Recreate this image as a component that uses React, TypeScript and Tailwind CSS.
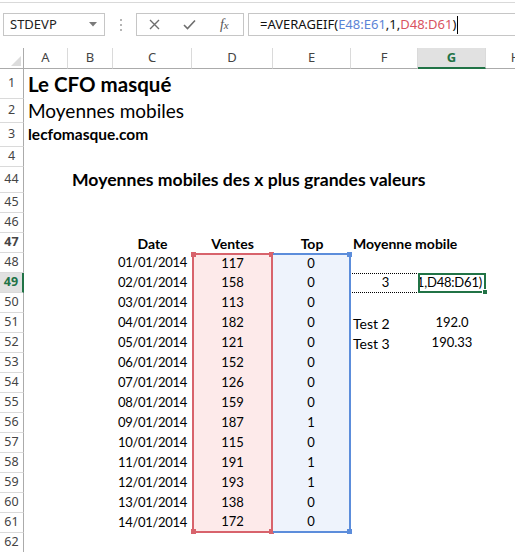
import React from "react";

const W = {
  hdr: "w-[24px]",
  A: "w-[44px]",
  B: "w-[45px]",
  C: "w-[79px]",
  D: "w-[81px]",
  E: "w-[78px]",
  F: "w-[67px]",
  G: "w-[68px]",
  H: "w-[60px]",
};

const data: [string, string, string][] = [
  ["01/01/2014", "117", "0"],
  ["02/01/2014", "158", "0"],
  ["03/01/2014", "113", "0"],
  ["04/01/2014", "182", "0"],
  ["05/01/2014", "121", "0"],
  ["06/01/2014", "152", "0"],
  ["07/01/2014", "126", "0"],
  ["08/01/2014", "159", "0"],
  ["09/01/2014", "187", "1"],
  ["10/01/2014", "115", "0"],
  ["11/01/2014", "191", "1"],
  ["12/01/2014", "193", "1"],
  ["13/01/2014", "138", "0"],
  ["14/01/2014", "172", "0"],
];

const hdrFont = { fontFamily: '"Noto Sans", "Open Sans", sans-serif' };

function RowHeader({ n, active }: { n: number; active?: boolean }) {
  return (
    <div
      className={`${W.hdr} shrink-0 flex items-center justify-center border-b border-[#dadada] text-[12.5px] ${
        active
          ? "bg-[#e1e1e1] text-[#217346] font-bold border-r-2 border-r-[#217346]"
          : "text-[#444] border-r border-r-[#ababab]"
      }`}
      style={hdrFont}
    >
      {n}
    </div>
  );
}

function Corner({ color, pos }: { color: string; pos: string }) {
  return <div className={`absolute w-[5px] h-[5px] ${color} ${pos}`} />;
}

export default function App() {
  const colLetters: [string, string][] = [
    ["A", W.A],
    ["B", W.B],
    ["C", W.C],
    ["D", W.D],
    ["E", W.E],
    ["F", W.F],
    ["G", W.G],
    ["H", W.H],
  ];

  return (
    <div
      className="w-[515px] h-[552px] overflow-hidden bg-white text-black"
      style={{ fontFamily: 'Lato, "Noto Sans", sans-serif' }}
    >
      {/* top line */}
      <div className="h-[3px] border-b border-[#d9d9d9]" />
      {/* formula bar */}
      <div className="h-[45px] flex items-start pt-[10px]" style={hdrFont}>
        <div className="ml-[3px] w-[102px] h-[23px] border border-[#c6c6c6] flex items-center justify-between pl-[6px] pr-[7px]">
          <span className="text-[13px] text-[#222]">STDEVP</span>
          <svg width="8" height="5" viewBox="0 0 8 5">
            <path d="M0 0 H8 L4 4.5 Z" fill="#7a7a7a" />
          </svg>
        </div>
        <div className="w-[31px] h-[23px] flex flex-col items-center justify-center gap-[3px]">
          <div className="w-[2px] h-[2px] bg-[#b5b5b5]" />
          <div className="w-[2px] h-[2px] bg-[#b5b5b5]" />
          <div className="w-[2px] h-[2px] bg-[#b5b5b5]" />
        </div>
        <div className="w-[108px] h-[23px] border border-[#c6c6c6] flex items-center">
          <div className="w-[36px] flex justify-center">
            <svg width="11" height="11" viewBox="0 0 11 11">
              <path d="M1 1 L10 10 M10 1 L1 10" stroke="#6e6e6e" strokeWidth="1.4" />
            </svg>
          </div>
          <div className="w-[34px] flex justify-center">
            <svg width="13" height="11" viewBox="0 0 13 11">
              <path d="M1 6 L4.5 9.5 L12 1.5" stroke="#6e6e6e" strokeWidth="1.6" fill="none" />
            </svg>
          </div>
          <div className="w-[38px] flex justify-center">
            <span
              className="italic text-[14px] text-[#555] leading-none"
              style={{ fontFamily: '"Liberation Serif", serif' }}
            >
              f<span className="text-[11px]">x</span>
            </span>
          </div>
        </div>
        <div className="ml-[4px] flex-1 h-[23px] border-y border-l border-[#c6c6c6] flex items-center pl-[11px]">
          <span className="text-[13px] whitespace-nowrap text-[#111]">
            =AVERAGEIF(<span className="text-[#5b84d6]">E48:E61</span>,1,
            <span className="text-[#d9535f]">D48:D61</span>)
          </span>
          <div className="w-[1px] h-[18px] bg-black ml-[1px]" />
        </div>
      </div>

      {/* column headers */}
      <div className="flex h-[21px]" style={hdrFont}>
        <div className={`${W.hdr} shrink-0 border-b border-r border-[#ababab] flex items-end justify-end p-[2px]`}>
          <svg width="10" height="10" viewBox="0 0 10 10">
            <path d="M10 0 V10 H0 Z" fill="#dcdcdc" />
          </svg>
        </div>
        {colLetters.map(([l, w]) => (
          <div
            key={l}
            className={`${w} shrink-0 flex items-center justify-center text-[13px] ${
              l === "G"
                ? "bg-[#e1e1e1] text-[#217346] font-bold border-b-2 border-[#217346] border-r border-r-[#dadada]"
                : "text-[#444] border-b border-[#ababab] border-r border-r-[#dadada]"
            }`}
          >
            {l}
          </div>
        ))}
      </div>

      {/* row 1 */}
      <div className="flex h-[30px]">
        <RowHeader n={1} />
        <div className="flex-1 flex items-center pl-[4px] pt-[1px] text-[20.5px] font-bold whitespace-nowrap">
          Le CFO masqué
        </div>
      </div>
      <div className="flex h-[24px]">
        <RowHeader n={2} />
        <div className="flex-1 flex items-center pl-[4px] text-[19px] whitespace-nowrap">
          Moyennes mobiles
        </div>
      </div>
      <div className="flex h-[24px]">
        <RowHeader n={3} />
        <div className="flex-1 flex items-center pl-[4px] text-[15.5px] font-bold whitespace-nowrap">
          lecfomasque.com
        </div>
      </div>
      <div className="flex h-[20px]">
        <RowHeader n={4} />
      </div>
      <div className="flex h-[26px]">
        <RowHeader n={44} />
        <div className={`${W.A} shrink-0`} />
        <div className="flex-1 flex items-center pl-[4px] pt-[1px] text-[17.6px] font-bold whitespace-nowrap">
          Moyennes mobiles des x plus grandes valeurs
        </div>
      </div>
      <div className="flex h-[20px]">
        <RowHeader n={45} />
      </div>
      <div className="flex h-[20px]">
        <RowHeader n={46} />
      </div>
      {/* row 47 headers */}
      <div className="flex h-[20px] text-[14px] font-bold">
        <RowHeader n={47} />
        <div className={`${W.A} shrink-0`} />
        <div className={`${W.B} shrink-0`} />
        <div className={`${W.C} shrink-0 flex items-center justify-center`}>Date</div>
        <div className={`${W.D} shrink-0 flex items-center justify-center`}>Ventes</div>
        <div className={`${W.E} shrink-0 flex items-center justify-center`}>Top</div>
        <div className={`${W.F} shrink-0 flex items-center pl-[2px] whitespace-nowrap`}>Moyenne mobile</div>
      </div>

      {data.map(([d, v, t], i) => {
        const n = 48 + i;
        const first = i === 0;
        const last = i === data.length - 1;
        return (
          <div key={n} className="flex h-[20px] text-[14px]">
            <RowHeader n={n} active={n === 49} />
            <div className={`${W.A} shrink-0`} />
            <div className={`${W.B} shrink-0`} />
            <div className={`${W.C} shrink-0 flex items-center justify-end pr-[5px] text-[13px] tracking-[-0.3px]`}>
              {d}
            </div>
            <div
              className={`${W.D} shrink-0 relative flex items-center justify-center bg-[#fdeaea] border-x-2 border-[#d8636c] text-[13px] ${
                first ? "border-t-2" : ""
              } ${last ? "border-b-2" : ""}`}
            >
              {v}
              {first && <Corner color="bg-[#d8636c]" pos="-top-[3px] -left-[3px]" />}
              {first && <Corner color="bg-[#d8636c]" pos="-top-[3px] -right-[3px]" />}
              {last && <Corner color="bg-[#d8636c]" pos="-bottom-[3px] -left-[3px]" />}
              {last && <Corner color="bg-[#d8636c]" pos="-bottom-[3px] -right-[3px]" />}
            </div>
            <div
              className={`${W.E} shrink-0 relative flex items-center justify-center bg-[#eef3fc] border-r-2 border-[#5c8ddb] text-[13px] ${
                first ? "border-t-2" : ""
              } ${last ? "border-b-2" : ""}`}
            >
              {t}
              {first && <Corner color="bg-[#5c8ddb]" pos="-top-[3px] -right-[3px]" />}
              {last && <Corner color="bg-[#5c8ddb]" pos="-bottom-[3px] -right-[3px]" />}
            </div>
            {n === 49 ? (
              <>
                <div
                  className={`${W.F} shrink-0 flex items-center justify-center border-y border-dotted border-black ml-[1px] text-[13px]`}
                >
                  3
                </div>
                <div
                  className={`${W.G} shrink-0 relative flex items-center justify-end border-2 border-[#217346] -ml-[1px] text-[13px]`}
                >
                  <div className="overflow-hidden w-full flex justify-end pr-[2px]">
                    <span className="whitespace-nowrap tracking-[-0.2px]">=AVERAGEIF(E48:E61,1,D48:D61)</span>
                  </div>
                  <div className="absolute -right-[4px] -bottom-[4px] w-[6px] h-[6px] bg-[#217346] border border-white" />
                </div>
              </>
            ) : n === 51 || n === 52 ? (
              <>
                <div className={`${W.F} shrink-0 flex items-center pl-[2px]`}>{n === 51 ? "Test 2" : "Test 3"}</div>
                <div className={`${W.G} shrink-0 flex items-center justify-center text-[13px]`}>
                  {n === 51 ? "192.0" : "190.33"}
                </div>
              </>
            ) : null}
          </div>
        );
      })}
      <div className="flex h-[20px]">
        <RowHeader n={62} />
      </div>
    </div>
  );
}
